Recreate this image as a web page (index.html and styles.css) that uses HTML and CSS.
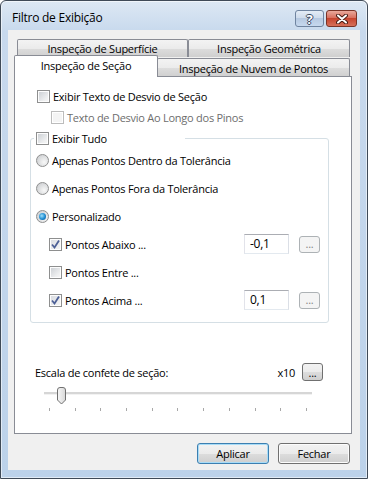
FILE: index.html
```html
<!DOCTYPE html>
<html lang="pt">
<head>
  <meta charset="UTF-8">
  <title>Filtro de Exibição</title>
  <link rel="stylesheet" href="styles.css">
</head>
<body>
  <div class="window">
    <div class="titlebar">
      <span class="title">Filtro de Exibição</span>
      <div class="caption-buttons">
        <span class="cap-btn help">?</span>
        <span class="cap-btn close">
          <svg width="12" height="10" viewBox="0 0 12 10">
            <path d="M2 1.5 L10 8.5 M10 1.5 L2 8.5" stroke="#4a1c14" stroke-width="4" stroke-linecap="round"/>
            <path d="M2 1.5 L10 8.5 M10 1.5 L2 8.5" stroke="#fff" stroke-width="2" stroke-linecap="round"/>
          </svg>
        </span>
      </div>
    </div>

    <div class="client">
      <div class="tab-row back">
        <div class="tab t-surface">Inspeção de Superfície</div>
        <div class="tab t-geo">Inspeção Geométrica</div>
      </div>
      <div class="tab-row front">
        <div class="tab selected t-secao">Inspeção de Seção</div>
        <div class="tab t-nuvem">Inspeção de Nuvem de Pontos</div>
      </div>

      <div class="panel">
        <div class="opt-line first">
          <span class="chk"></span>
          <span>Exibir Texto de Desvio de Seção</span>
        </div>
        <div class="opt-line sub disabled">
          <span class="chk"></span>
          <span>Texto de Desvio Ao Longo dos Pinos</span>
        </div>

        <fieldset class="group">
          <legend class="group-title">
            <span class="chk"></span>
            <span>Exibir Tudo</span>
          </legend>

          <div class="opt radio-row first">
            <span class="radio"></span>
            <span>Apenas Pontos Dentro da Tolerância</span>
          </div>
          <div class="opt radio-row">
            <span class="radio"></span>
            <span>Apenas Pontos Fora da Tolerância</span>
          </div>
          <div class="opt radio-row">
            <span class="radio on"></span>
            <span>Personalizado</span>
          </div>

          <div class="opt limit-row">
            <span class="chk checked">
              <svg width="11" height="11" viewBox="0 0 11 11"><path d="M2 5.5 L4.5 8.5 L9 1.5" fill="none" stroke="#4c5f96" stroke-width="1.8"/></svg>
            </span>
            <span class="limit-label">Pontos Abaixo ...</span>
            <span class="value-box">-0,1</span>
            <span class="mini-btn">...</span>
          </div>
          <div class="opt limit-row">
            <span class="chk"></span>
            <span class="limit-label">Pontos Entre ...</span>
          </div>
          <div class="opt limit-row">
            <span class="chk checked">
              <svg width="11" height="11" viewBox="0 0 11 11"><path d="M2 5.5 L4.5 8.5 L9 1.5" fill="none" stroke="#4c5f96" stroke-width="1.8"/></svg>
            </span>
            <span class="limit-label">Pontos Acima ...</span>
            <span class="value-box">0,1</span>
            <span class="mini-btn">...</span>
          </div>
        </fieldset>

        <div class="scale-row">
          <span class="scale-label">Escala de confete de seção:</span>
          <span class="scale-value">x10</span>
          <span class="dots-btn">...</span>
        </div>

        <div class="slider">
          <div class="track"></div>
          <div class="ticks">
            <i></i><i></i><i></i><i></i><i></i><i></i><i></i><i></i><i></i><i></i><i></i>
          </div>
          <svg class="thumb" width="11" height="18" viewBox="0 0 11 18">
            <defs>
              <linearGradient id="thumbFill" x1="0" y1="0" x2="1" y2="0">
                <stop offset="0" stop-color="#f7f7f7"/>
                <stop offset="1" stop-color="#d8d8d8"/>
              </linearGradient>
            </defs>
            <path d="M1.5 3 Q1.5 0.5 4 0.5 L7 0.5 Q9.5 0.5 9.5 3 L9.5 13 L5.5 17 L1.5 13 Z" fill="url(#thumbFill)" stroke="#707070"/>
          </svg>
        </div>
      </div>

      <div class="actions">
        <button class="btn default">Aplicar</button>
        <button class="btn">Fechar</button>
      </div>
    </div>
  </div>
</body>
</html>
```

FILE: styles.css
```css
body {
  margin: 0;
  overflow: hidden;
  font-family: "Open Sans", "Noto Sans", sans-serif;
  font-size: 11px;
  letter-spacing: -0.25px;
  color: #000;
}
.window {
  box-sizing: border-box;
  width: 368px;
  height: 479px;
  border: 1px solid #3f4a57;
  border-radius: 6px 6px 0 0;
  background: linear-gradient(#dde8f4, #c8d9ed 30px, #bcd2ea);
  box-shadow: inset 0 0 0 1px rgba(255, 255, 255, 0.55);
  display: flex;
  flex-direction: column;
}

/* title bar */
.titlebar {
  height: 29px;
  display: flex;
  align-items: flex-start;
  padding: 0 10px 0 11px;
}
.title {
  margin-top: 9px;
  line-height: 16px;
  font-size: 12px;
  flex: 1;
}
.caption-buttons {
  margin-top: 9px;
  display: flex;
  gap: 2px;
}
.cap-btn {
  box-sizing: border-box;
  height: 17px;
  border-radius: 3px;
  display: flex;
  align-items: center;
  justify-content: center;
}
.help {
  width: 29px;
  border: 1px solid #6f84a0;
  background: linear-gradient(#e3ecf6, #cfdcec 45%, #b6c9e1 50%, #c6d8ee);
  color: #fff;
  font-weight: bold;
  font-size: 13px;
  text-shadow: 1px 0 #3a4a63, -1px 0 #3a4a63, 0 1px #3a4a63, 0 -1px #3a4a63;
}
.close {
  width: 31px;
  border: 1px solid #7a3326;
  background: linear-gradient(#e9a99c, #d9705f 45%, #c7452f 50%, #d6705a);
}

/* client area */
.client {
  margin: 0 7px;
  height: 440px;
  background: #f0f0f0;
  padding: 9px 8px 0 6px;
  box-sizing: border-box;
  display: flex;
  flex-direction: column;
}

/* tabs */
.tab-row {
  display: flex;
  align-items: flex-end;
}
.tab {
  box-sizing: border-box;
  border: 1px solid #898c95;
  border-bottom: none;
  border-radius: 2px 2px 0 0;
  background: linear-gradient(#f3f3f3, #ebebeb 50%, #dddddd 50%, #cfcfcf);
  text-align: center;
}
.back {
  margin-left: 3px;
  height: 18px;
}
.back .tab {
  height: 18px;
  line-height: 17px;
}
.t-surface { width: 171px; }
.t-geo { width: 162px; }
.front {
  margin-top: -2px;
  margin-bottom: -1px;
  height: 22px;
}
.selected {
  position: relative;
  z-index: 2;
  width: 144px;
  height: 22px;
  line-height: 19px;
  background: #fff;
}
.t-nuvem {
  width: 193px;
  height: 19px;
  line-height: 19px;
  margin-left: -1px;
}

/* tab panel */
.panel {
  position: relative;
  z-index: 1;
  box-sizing: border-box;
  height: 358px;
  background: #fff;
  border: 1px solid #898c95;
  display: flex;
  flex-direction: column;
}
.opt-line {
  display: flex;
  align-items: center;
  height: 13px;
  gap: 3px;
  margin: 8px 0 0 36px;
}
.opt-line.first {
  margin: 13px 0 0 22px;
}
.disabled {
  color: #6d6d6d;
}

/* check boxes and radios */
.chk {
  box-sizing: border-box;
  width: 13px;
  height: 13px;
  flex: none;
  border: 1px solid #8e8f8f;
  background: linear-gradient(135deg, #c9cdd2, #eeeff0 70%, #f8f8f8);
  box-shadow: inset 0 0 0 1px #fdfdfd;
  display: flex;
  align-items: center;
  justify-content: center;
}
.disabled .chk {
  border-color: #bcbcbc;
  background: #f4f4f4;
  box-shadow: inset 0 0 0 1px #fff;
}
.chk.checked {
  background: linear-gradient(135deg, #d8dbe0, #f6f6f6);
}
.radio {
  box-sizing: border-box;
  width: 13px;
  height: 13px;
  flex: none;
  border-radius: 50%;
  border: 1px solid #8e8f8f;
  background: radial-gradient(circle at 65% 65%, #f8f8f8, #d4d6d8 70%, #c4c6c9);
  display: flex;
  align-items: center;
  justify-content: center;
}
.radio.on::after {
  content: "";
  width: 7px;
  height: 7px;
  border-radius: 50%;
  background: radial-gradient(circle at 40% 40%, #9ee0fb, #1c8ad0 55%, #0c4a86);
}

/* group box */
.group {
  box-sizing: border-box;
  width: 299px;
  margin: 8px 0 0 15px;
  padding: 0 8px 8px 0;
  border: 1px solid #d5dfe5;
  border-radius: 3px;
  min-width: 0;
}
.group-title {
  box-sizing: border-box;
  width: 151px;
  height: 13px;
  margin-left: 3px;
  padding: 0 0 0 2px;
  display: flex;
  align-items: center;
  gap: 3px;
}
.opt {
  height: 28px;
  display: flex;
  align-items: center;
  gap: 3px;
}
.opt.first {
  margin-top: 1px;
}
.radio-row {
  padding-left: 5px;
}
.limit-row {
  padding-left: 18px;
}
.limit-label {
  flex: 1;
}
.value-box {
  box-sizing: border-box;
  width: 45px;
  height: 20px;
  line-height: 18px;
  padding-left: 5px;
  font-size: 12px;
  border: 1px solid;
  border-color: #abadb3 #dbdfe6 #e3e9ef #e2e3ea;
  background: #fff;
}
.mini-btn {
  box-sizing: border-box;
  width: 21px;
  height: 17px;
  margin-left: 7px;
  border: 1px solid #adb2b5;
  border-radius: 3px;
  background: #f4f4f4;
  color: #838383;
  text-align: center;
  line-height: 13px;
}

/* scale */
.scale-row {
  display: flex;
  align-items: center;
  height: 20px;
  margin: 39px 0 0 20px;
  padding-right: 28px;
}
.scale-label {
  flex: 1;
}
.dots-btn {
  box-sizing: border-box;
  width: 21px;
  height: 18px;
  margin-left: 7px;
  border: 1px solid #707070;
  border-radius: 3px;
  background: linear-gradient(#f2f2f2, #ebebeb 50%, #dddddd 50%, #cfcfcf);
  text-align: center;
  line-height: 18px;
}
.slider {
  position: relative;
  width: 268px;
  height: 24px;
  margin: 5px 0 0 29px;
}
.track {
  margin-top: 5px;
  height: 2px;
  background: #d6d6d6;
  border-bottom: 1px solid #f2f2f2;
}
.ticks {
  margin-top: 13px;
  padding: 0 5px;
  display: flex;
  justify-content: space-between;
}
.ticks i {
  width: 1px;
  height: 3px;
  background: #a8a8a8;
}
.thumb {
  position: absolute;
  left: 12px;
  top: 0;
}

/* dialog buttons */
.actions {
  display: flex;
  justify-content: flex-end;
  gap: 9px;
  margin: 9px 2px 0 0;
}
.btn {
  width: 72px;
  height: 21px;
  border: 1px solid #707070;
  border-radius: 3px;
  background: linear-gradient(#f2f2f2, #ebebeb 50%, #dddddd 50%, #cfcfcf);
  box-shadow: inset 0 0 0 1px #fcfcfc;
  font-family: inherit;
  font-size: 11px;
  letter-spacing: inherit;
  padding: 0;
}
.btn.default {
  border-color: #3c7fb1;
  box-shadow: inset 0 0 0 1px #a8dcf7;
}
```
